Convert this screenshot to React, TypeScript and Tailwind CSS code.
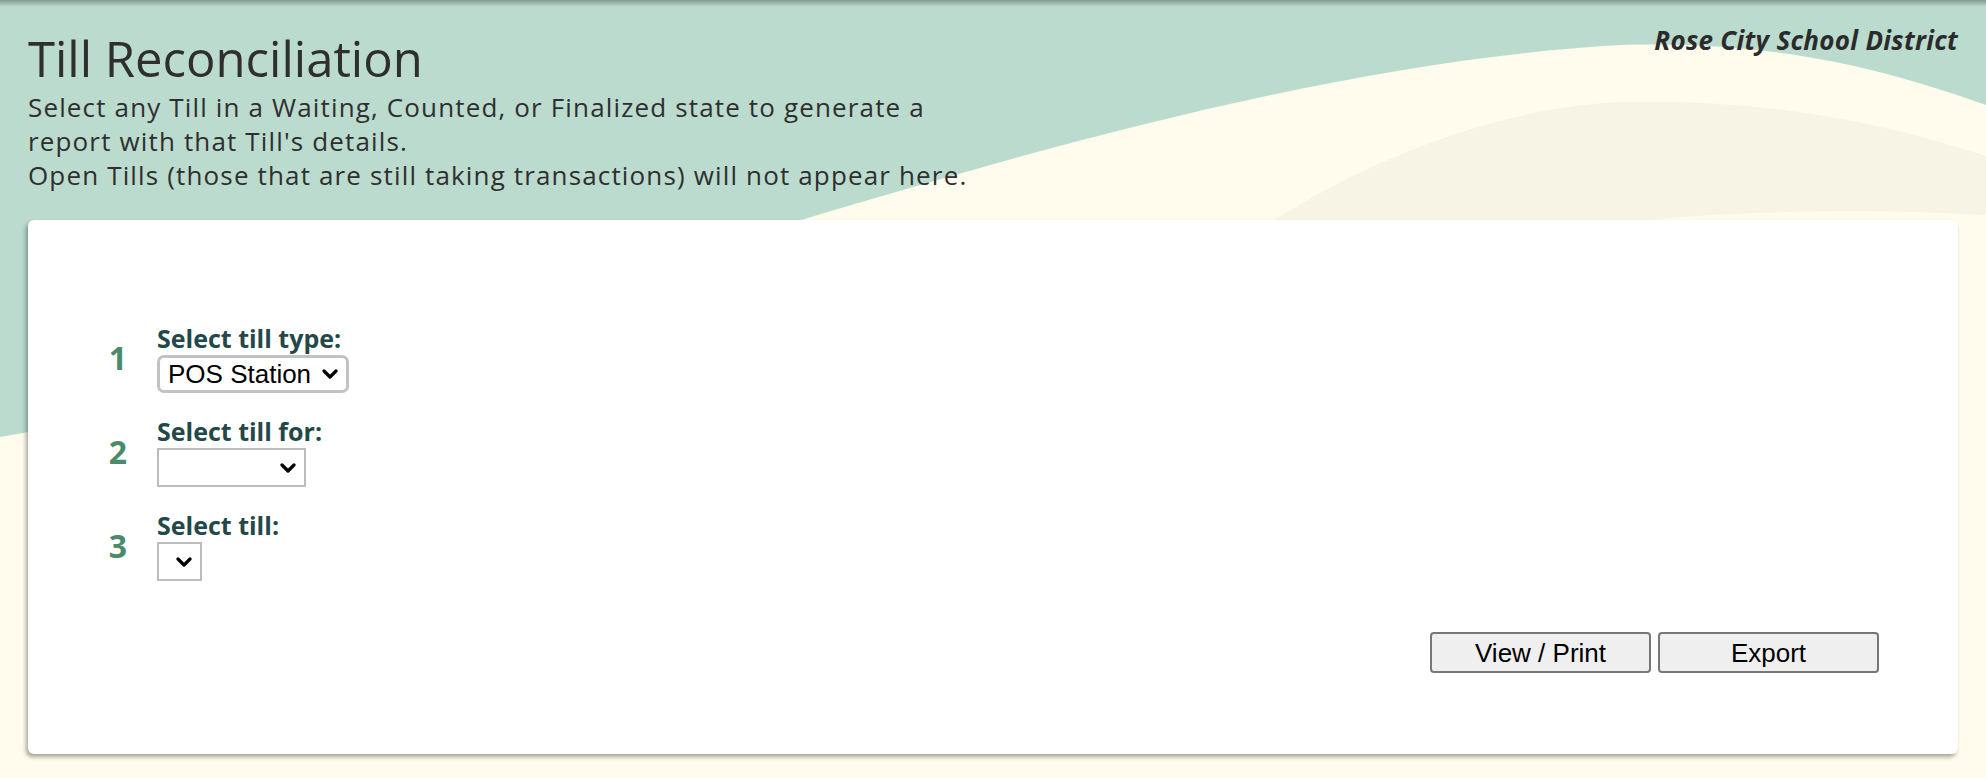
function Chevron() {
  return (
    <svg width="16" height="10" viewBox="0 0 16 10" fill="none">
      <path d="M2 2l6 6 6-6" stroke="#000" strokeWidth="3.2" strokeLinecap="round" strokeLinejoin="round" />
    </svg>
  );
}

function Step({ n, label, children }: { n: number; label: string; children: React.ReactNode }) {
  return (
    <div className="flex items-center gap-[27px]">
      <div className="w-[24px] text-center text-[32px] font-bold leading-none text-[#4b8b6b]">{n}</div>
      <div className="flex flex-col">
        <div className="text-[25px] font-bold leading-[30px] text-[#234848]">{label}</div>
        {children}
      </div>
    </div>
  );
}

export default function App() {
  return (
    <div className="relative h-[778px] w-full overflow-hidden bg-[#bbdbcf] font-['Open_Sans',sans-serif]">
      {/* background waves */}
      <svg className="absolute inset-0 h-full w-full" viewBox="0 0 1986 778" preserveAspectRatio="none">
        <path d="M0 437C500 350 1100 75 1620 45C1790 40 1900 75 1986 105L1986 778L0 778Z" fill="#fffbed" />
        <path d="M1050 400C1230 220 1430 112 1620 102C1780 98 1900 128 1986 156L1986 215C1800 205 1500 210 1280 300Z" fill="#f7f4e6" />
      </svg>
      <div className="absolute inset-x-0 top-0 h-[7px] bg-gradient-to-b from-black/30 to-transparent" />

      <div className="relative flex flex-col px-[28px]">
        {/* header */}
        <div className="flex justify-between">
          <div className="flex flex-col pt-[30px] text-[#2f2f2f]">
            <h1 className="text-[49px] leading-[56px]">Till Reconciliation</h1>
            <p className="mt-[4px] text-[26px] leading-[34px] tracking-[1.15px]">
              Select any Till in a Waiting, Counted, or Finalized state to generate a
              <br />
              report with that Till's details.
              <br />
              Open Tills (those that are still taking transactions) will not appear here.
            </p>
          </div>
          <div className="pt-[24px] text-[26px] font-bold italic leading-[32px] tracking-[0.3px] text-[#2b2b2b]">Rose City School District</div>
        </div>

        {/* card */}
        <div className="mt-[28px] flex h-[534px] flex-col rounded-[6px] bg-white pl-[78px] pr-[79px] pt-[103px] shadow-[-2px_3px_4px_rgba(0,0,0,0.35)]">
          <div className="flex flex-col gap-[23px]">
            <Step n={1} label="Select till type:">
              <div className="mt-[2px] flex h-[38px] w-[192px] items-center justify-between rounded-[7px] border-[3px] border-[#c2c2c2] pl-[8px] pr-[8px] font-['Liberation_Sans',sans-serif] text-[26px] text-black">
                <span>POS Station</span>
                <Chevron />
              </div>
            </Step>
            <Step n={2} label="Select till for:">
              <div className="mt-[2px] flex h-[39px] w-[149px] items-center justify-end border-2 border-[#bdbdbd] pr-[8px]">
                <Chevron />
              </div>
            </Step>
            <Step n={3} label="Select till:">
              <div className="mt-[2px] flex h-[39px] w-[45px] items-center justify-end border-2 border-[#bdbdbd] pr-[8px]">
                <Chevron />
              </div>
            </Step>
          </div>

          <div className="mt-[51px] flex justify-end gap-[7px] font-['Liberation_Sans',sans-serif] text-[26px] text-black">
            <button className="h-[41px] w-[221px] rounded-[4px] border-2 border-[#777] bg-[#efefef] leading-none">View / Print</button>
            <button className="h-[41px] w-[221px] rounded-[4px] border-2 border-[#777] bg-[#efefef] leading-none">Export</button>
          </div>
        </div>
      </div>
    </div>
  );
}
